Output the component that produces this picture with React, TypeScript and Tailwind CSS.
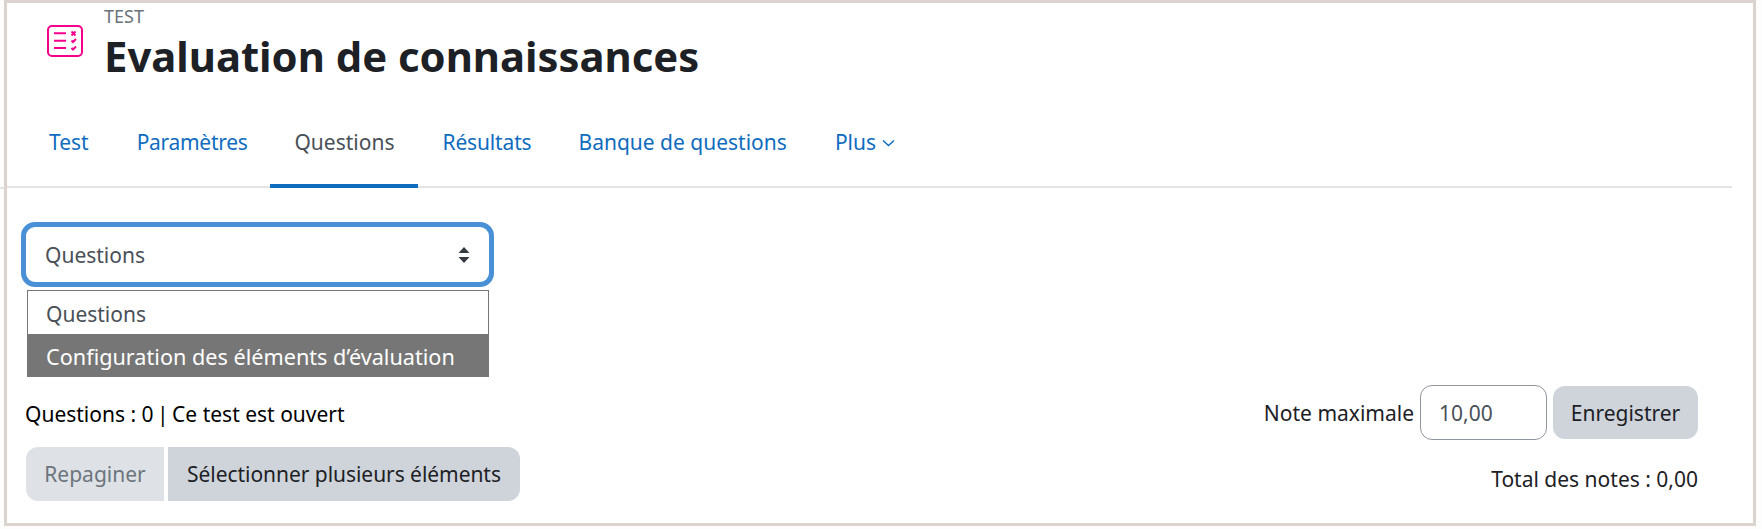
export default function App() {
  return (
    <div className="relative w-[1762px] h-[529px] bg-[#fdfdfd] font-['Noto_Sans',sans-serif] text-[21px] leading-[30px] text-[#1d2125]">
      <span className="absolute left-0 top-[187px] w-[4px] h-[2px] bg-[#e3e3e3]" />
      <div className="ml-[4px] w-[1752px] h-[526px] border-[3px] border-[#dcd3cf] bg-white overflow-hidden">
        <header className="flex pl-[40px] h-[81px]">
          <svg width="36" height="32" viewBox="0 0 36 32" fill="none" className="mt-[22px] shrink-0" stroke="#f5008c" strokeWidth="2">
            <rect x="1" y="1" width="34" height="30" rx="4" />
            <path d="M7 8.3H19M7 15.7H19M7 23H19" />
            <path d="M24.5 6.5L28.5 10.5M28.5 6.5L24.5 10.5" />
            <path d="M24.5 15.5L26 17L29 14M24.5 23L26 24.5L29 21.5" />
          </svg>
          <div className="ml-[21px]">
            <div className="text-[18px] leading-[24px] text-[#6a737b] mt-[1px]">TEST</div>
            <h1 className="text-[41.8px] leading-[46px] font-bold mt-[5px]">Evaluation de connaissances</h1>
          </div>
        </header>
        <nav className="flex h-[104px] w-[1725px] pl-[18px] border-b-2 border-[#e3e3e3]">
          <a className="px-[24px] h-[104px] pt-[43px] text-[#0f6cbf]">Test</a>
          <a className="pl-[24px] pr-[23px] h-[104px] pt-[43px] text-[#0f6cbf] tracking-[-0.3px]">Paramètres</a>
          <a className="px-[24px] h-[104px] pt-[43px] text-[#495057] border-b-4 border-[#0f6cbf]">Questions</a>
          <a className="pl-[24px] pr-[23px] h-[104px] pt-[43px] text-[#0f6cbf] tracking-[-0.15px]">Résultats</a>
          <a className="px-[24px] h-[104px] pt-[43px] text-[#0f6cbf]">Banque de questions</a>
          <a className="px-[24px] pt-[43px] text-[#0f6cbf] flex items-start gap-[6px]">
            Plus
            <svg width="13" height="8" viewBox="0 0 13 8" fill="none" stroke="#0f6cbf" strokeWidth="1.5" className="mt-[12px]"><path d="M1 1.5L6.5 6.5L12 1.5" /></svg>
          </a>
        </nav>
        <main className="flex flex-col pl-[14px] pr-[55px]">
          <div className="mt-[34px] w-[473px] h-[65px] rounded-[14px] border-[5px] border-[#4a90d6] flex items-center justify-between pl-[19px] pr-[19px] text-[#495057]">
            <span>Questions</span>
            <svg width="12" height="18" viewBox="0 0 12 18" fill="#343a40"><path d="M6 1L11.5 7H0.5ZM6 17L0.5 11H11.5Z" /></svg>
          </div>
          <ul className="ml-[6px] mt-[3px] w-[462px] h-[87px] border border-[#767676] text-[#495057]">
            <li className="h-[43px] pl-[18px] pt-[8px]">Questions</li>
            <li className="h-[43px] pl-[18px] pt-[8px] bg-[#767676] text-white text-[21.65px]">Configuration des éléments d’évaluation</li>
          </ul>
          <div className="flex justify-between mt-[9px]">
            <div className="pl-[4px]">
              <p className="mt-[13px] text-black">Questions : 0 <span className="-mx-[2px]">|</span> Ce test est ouvert</p>
              <div className="flex gap-[4px] mt-[18px] ml-[1px]">
                <button className="h-[54px] w-[138px] rounded-l-[12px] bg-[#dee2e6] text-[#6c757d]">Repaginer</button>
                <button className="h-[54px] w-[352px] rounded-r-[12px] bg-[#ced4da] tracking-[-0.05px]">Sélectionner plusieurs éléments</button>
              </div>
            </div>
            <div className="flex flex-col items-end -mt-[1px]">
              <div className="flex items-center">
                <span>Note maximale</span>
                <div className="ml-[6px] w-[127px] h-[55px] rounded-[12px] border border-[#8f959e] pl-[18px] flex items-center text-[#495057]">10,00</div>
                <button className="ml-[6px] w-[145px] h-[53px] rounded-[12px] bg-[#ced4da]">Enregistrer</button>
              </div>
              <p className="mt-[24px]">Total des notes : 0,00</p>
            </div>
          </div>
        </main>
      </div>
    </div>
  );
}
